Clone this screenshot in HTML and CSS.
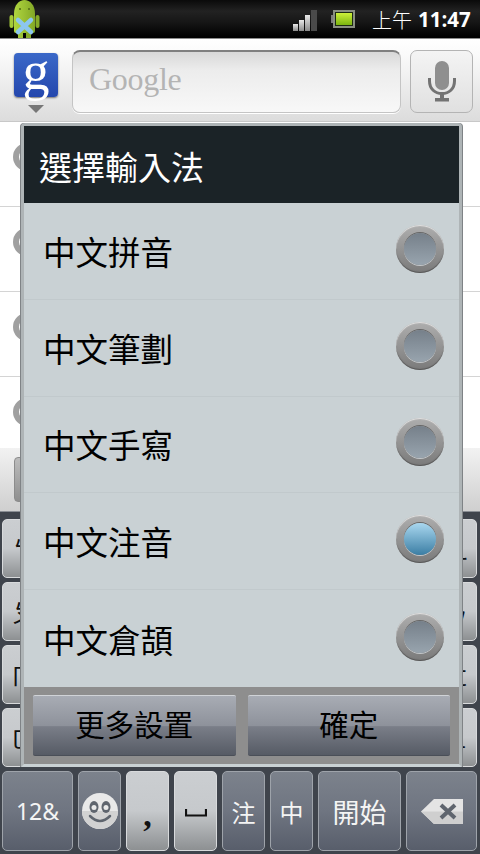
FILE: index.html
```html
<!DOCTYPE html>
<html lang="zh-Hant">
<head>
<meta charset="utf-8">
<title>選擇輸入法</title>
<link rel="stylesheet" href="styles.css">
</head>
<body>
<div class="phone">
  <header class="status">
    <svg class="droid" width="32" height="38" viewBox="0 0 32 38">
      <defs><linearGradient id="dg" x1="0" y1="0" x2="1" y2="0"><stop offset="0" stop-color="#b0d63f"/><stop offset="1" stop-color="#83a826"/></linearGradient></defs>
      <path d="M6 14C6 5 11 0 16.500 0S27 5 27 14V31Q27 33 25 33H8Q6 33 6 31z" fill="url(#dg)"/>
      <rect x="1.500" y="15" width="4" height="13" rx="2" fill="#a4ca38"/>
      <rect x="27.500" y="15" width="4" height="13" rx="2" fill="#86aa28"/>
      <rect x="10" y="32" width="5" height="6" fill="#9dc235"/>
      <rect x="18" y="32" width="5" height="6" fill="#86aa28"/>
      <circle cx="12" cy="9" r="1" fill="#4f6a16"/>
      <circle cx="21" cy="9" r="1" fill="#4f6a16"/>
      <path d="M10 20 23 32M23 20 10 32" stroke="#8cc6ee" stroke-width="4.500" stroke-linecap="round"/>
    </svg>
    <svg class="signal" width="24" height="21" viewBox="0 0 24 21">
      <defs><linearGradient id="sg" x1="0" y1="0" x2="0" y2="1"><stop offset="0" stop-color="#e8e8e8"/><stop offset="1" stop-color="#8a8a8a"/></linearGradient></defs>
      <rect x="0" y="14" width="5" height="7" fill="url(#sg)"/>
      <rect x="6" y="10" width="5" height="11" fill="url(#sg)"/>
      <rect x="12" y="5" width="5" height="16" fill="url(#sg)"/>
      <rect x="18" y="0" width="6" height="21" fill="#4a4a4a"/>
    </svg>
    <svg class="battery" width="24" height="18" viewBox="0 0 24 18">
      <defs><linearGradient id="bg" x1="0" y1="0" x2="0" y2="1"><stop offset="0" stop-color="#cdf03a"/><stop offset="1" stop-color="#7cb510"/></linearGradient></defs>
      <rect x="0" y="5" width="2" height="8" fill="#7c7c7c"/>
      <rect x="2" y="0" width="22" height="18" fill="#8a8f82"/>
      <rect x="4" y="2" width="18" height="14" fill="#1d2a12"/>
      <rect x="5" y="3" width="16" height="12" fill="url(#bg)"/>
    </svg>
    <div class="clock"><span class="ampm">上午</span><b class="time">11:47</b></div>
  </header>

  <section class="search">
    <div class="gwrap">
      <div class="glogo">g</div>
      <div class="garrow"></div>
    </div>
    <div class="input">Google</div>
    <div class="mic">
      <svg width="28" height="42" viewBox="0 0 28 42">
        <rect x="7" y="0" width="14" height="29" rx="7" fill="#8f8f8f"/>
        <path d="M1.500 17V20C1.500 28 7 32.500 14 32.500S26.500 28 26.500 20V17" fill="none" stroke="#737373" stroke-width="3"/>
        <rect x="12" y="32" width="4" height="6" fill="#737373"/>
        <rect x="7" y="37" width="14" height="3.500" fill="#737373"/>
      </svg>
    </div>
  </section>

  <ul class="results">
    <li class="result"><span class="result-dot"></span></li>
    <li class="result"><span class="result-dot"></span></li>
    <li class="result"><span class="result-dot"></span></li>
    <li class="result"><span class="result-dot"></span></li>
  </ul>

  <div class="candidates"><span class="cand-key"></span></div>

  <div class="keyboard">
    <div class="kb-row"><span class="key light">ㄅ</span><span class="key light">ㄦ</span></div>
    <div class="kb-row"><span class="key light">ㄆ</span><span class="key light">ㄣ</span></div>
    <div class="kb-row"><span class="key light">ㄇ</span><span class="key light">ㄤ</span></div>
    <div class="kb-row"><span class="key light">ㄈ</span><span class="key light">ㄥ</span></div>
    <div class="kb-bottom">
      <span class="key dark w71 num">12&amp;</span>
      <span class="key dark w43">
        <svg width="36" height="36" viewBox="0 0 36 36">
          <circle cx="18" cy="18" r="18" fill="#e9e9e9"/>
          <path d="M0 18a18 18 0 0 0 36 0z" fill="#d2d2d2"/>
          <ellipse cx="12" cy="14" rx="4.500" ry="6" fill="#5f656e"/>
          <ellipse cx="24" cy="14" rx="4.500" ry="6" fill="#5f656e"/>
          <circle cx="12" cy="14.500" r="2.500" fill="#e9e9e9"/>
          <circle cx="24" cy="14.500" r="2.500" fill="#e9e9e9"/>
          <path d="M8 23Q18 33 28 23" fill="none" stroke="#5f656e" stroke-width="2.500" stroke-linecap="round"/>
        </svg>
      </span>
      <span class="key light w43 comma">,</span>
      <span class="key light w43 spacebar">
        <svg width="22" height="8" viewBox="0 0 22 8"><path d="M1 0V6.500H21V0" fill="none" stroke="#111" stroke-width="2.200"/></svg>
      </span>
      <span class="key dark w43">注</span>
      <span class="key dark w43">中</span>
      <span class="key dark w83 start">開始</span>
      <span class="key dark w71">
        <svg width="43" height="27" viewBox="0 0 43 27">
          <path d="M14 1H43V26H14L1 13.500z" fill="#e4e4e4"/>
          <path d="M1 13.500H43V26H14z" fill="#cfcfcf"/>
          <path d="M21 7 35 20M35 7 21 20" stroke="#5f656e" stroke-width="4"/>
        </svg>
      </span>
    </div>
  </div>

  <div class="dialog">
    <h1 class="dialog-title">選擇輸入法</h1>
    <ul class="options">
      <li class="option"><span class="option-label">中文拼音</span><i class="radio"></i></li>
      <li class="option"><span class="option-label">中文筆劃</span><i class="radio"></i></li>
      <li class="option"><span class="option-label">中文手寫</span><i class="radio"></i></li>
      <li class="option"><span class="option-label">中文注音</span><i class="radio on"></i></li>
      <li class="option"><span class="option-label">中文倉頡</span><i class="radio"></i></li>
    </ul>
    <div class="dialog-actions">
      <button class="action">更多設置</button>
      <button class="action">確定</button>
    </div>
  </div>
</div>
</body>
</html>
```
FILE: styles.css
```css
* { box-sizing: border-box; }
html, body { margin: 0; padding: 0; }
body { width: 480px; height: 854px; overflow: hidden; background: #3f444c; font-family: "Noto Sans CJK TC", "Noto Sans", sans-serif; }
ul { list-style: none; margin: 0; padding: 0; }

.phone { position: relative; width: 480px; height: 854px; overflow: hidden; display: flex; flex-direction: column; }

.status { height: 38px; flex: none; display: flex; align-items: flex-start; padding-left: 8px; background: linear-gradient(#0a0a0a 0, #222 30%, #161616 60%, #000 100%); border-bottom: 1px solid #000; }
.droid { display: block; }
.signal { margin: 10px 0 0 253px; }
.battery { margin: 10px 0 0 14px; }
.clock { margin-left: 17px; height: 38px; display: flex; align-items: center; gap: 6px; color: #fff; white-space: nowrap; }
.ampm { font-size: 20px; font-weight: 300; }
.time { font-family: "Open Sans", "Noto Sans", sans-serif; font-size: 20.500px; font-weight: 700; }

.search { height: 84px; flex: none; display: flex; padding: 11px 7px 0 14px; background: linear-gradient(#fff 0, #fafafa 20%, #dcdcdc 100%); border-bottom: 1px solid #c8c8c8; border-top: 1px solid #8c8c8c; }
.gwrap { width: 44px; display: flex; flex-direction: column; align-items: center; padding-top: 3px; }
.glogo { width: 44px; height: 44px; border-radius: 4px; background: linear-gradient(#3a68c8, #2447ad); color: #fff; font-family: "Liberation Serif", serif; font-weight: 400; font-size: 54px; line-height: 36px; text-align: center; box-shadow: 0 1px 2px rgba(0,0,0,.5); }
.garrow { margin-top: 8px; width: 0; height: 0; border-style: solid; border-width: 8px 8px 0; border-color: #777 transparent transparent; }
.input { margin-left: 14px; width: 329px; height: 63px; border-radius: 8px; background: linear-gradient(#d8d8d8 0, #ececec 30%, #f8f8f8 100%); border: 1px solid #c4c4c4; border-top: 2px solid #7f7f7f; box-shadow: 0 1px 0 #fff; padding-left: 16px; color: #b4b4b4; font-family: "Liberation Serif", serif; font-size: 32px; line-height: 55px; letter-spacing: -0.300px; }
.mic { margin-left: 9px; width: 63px; height: 63px; border-radius: 7px; border: 1px solid #b4b4b4; background: linear-gradient(#f4f4f4, #e0e0e0); display: flex; align-items: center; justify-content: center; }

.results { height: 326px; flex: none; background: #fff; }
.result { height: 85px; border-bottom: 1px solid #d4d4d4; display: flex; align-items: flex-start; padding: 21px 0 0 13px; }
.result:last-child { height: 71px; border-bottom: 0; }
.result-dot { width: 28px; height: 28px; border-radius: 50%; background: #fff; border: 6px solid #a0a0a0; }

.candidates { height: 64px; flex: none; background: linear-gradient(#f2f2f2, #cfcfcf); padding: 9px 0 0 14px; border-bottom: 1px solid #8a8e94; }
.cand-key { display: block; width: 60px; height: 45px; border-radius: 4px; background: linear-gradient(#bcbcbc, #8f8f8f); border: 1px solid #8c8c8c; }

.keyboard { flex: 1; padding: 7px 3px 0 2px; display: flex; flex-direction: column; background: #3f444c; }
.kb-row { height: 59px; margin-bottom: 4px; display: flex; justify-content: space-between; }
.kb-bottom { height: 80px; display: flex; gap: 5px; }
.key { width: 43px; border-radius: 5px; display: flex; align-items: center; justify-content: center; font-size: 24px; border: 1px solid #b5b9bc; flex: none; }
.light { color: #111; background: linear-gradient(#cbced1 0, #c6c9cc 50%, #8d9092 100%); border-color: #d8dadc; }
.dark { color: #f4f4f4; background: linear-gradient(#7c828c 0, #6f7581 50%, #585e6b 100%); border-color: #9ea3aa; }
.w43 { width: 43px; }
.w71 { width: 71px; }
.w83 { width: 83px; }
.num { font-family: "Noto Sans", sans-serif; font-size: 23px; }
.comma { font-family: "Liberation Serif", serif; font-size: 34px; font-weight: 700; padding-top: 8px; }
.spacebar { padding-top: 3px; }
.start { font-size: 27px; }

.dialog { position: absolute; left: 21px; top: 123px; width: 441px; height: 644px; display: flex; flex-direction: column; border: 3px solid #aeb4b6; border-bottom-color: #c9d1d4; border-radius: 4px 4px 0 0; box-shadow: 1px 0 0 #7f8386, -1px 0 0 #7f8386; background: #c9d1d4; }
.dialog-title { margin: 0; height: 77px; flex: none; background: #1b2327; color: #fff; font-size: 33px; font-weight: 400; line-height: 80px; padding-left: 15px; }
.options { height: 484px; flex: none; }
.option { height: 96.800px; display: flex; align-items: center; justify-content: space-between; padding: 0 15px 4px 19px; font-size: 32.500px; color: #000; border-bottom: 1px solid #c1c9cc; }
.option:last-child { border-bottom: 0; }
.option-label { padding-top: 3px; }
.radio { width: 48px; height: 48px; border-radius: 50%; background: linear-gradient(#aeaeae, #7a7a7a); box-shadow: inset 0 1px 1px #e4e4e4, inset 0 -1px 1px #555; display: flex; align-items: center; justify-content: center; }
.radio::after { content: ""; width: 32px; height: 32px; border-radius: 50%; background: linear-gradient(#76808a, #98a4ae); box-shadow: 0 1px 0 #c2c6c9, 0 -1px 0 #666; }
.radio.on::after { background: linear-gradient(#a9d7ef, #3b7ea4); }

.dialog-actions { flex: 1; background: #8e8e8e; display: flex; gap: 12px; padding: 8px 9px 0; }
.action { flex: 1; height: 61px; font: inherit; font-size: 29.500px; line-height: 1; padding: 0 0 3px; color: #000; border: 0; border-top: 1px solid #d0d3d7; border-bottom: 1px solid #4a4f58; border-radius: 2px; background: linear-gradient(#a8acb4 0, #8e929b 50%, #7a7e88 52%, #565b65 100%); }
```
